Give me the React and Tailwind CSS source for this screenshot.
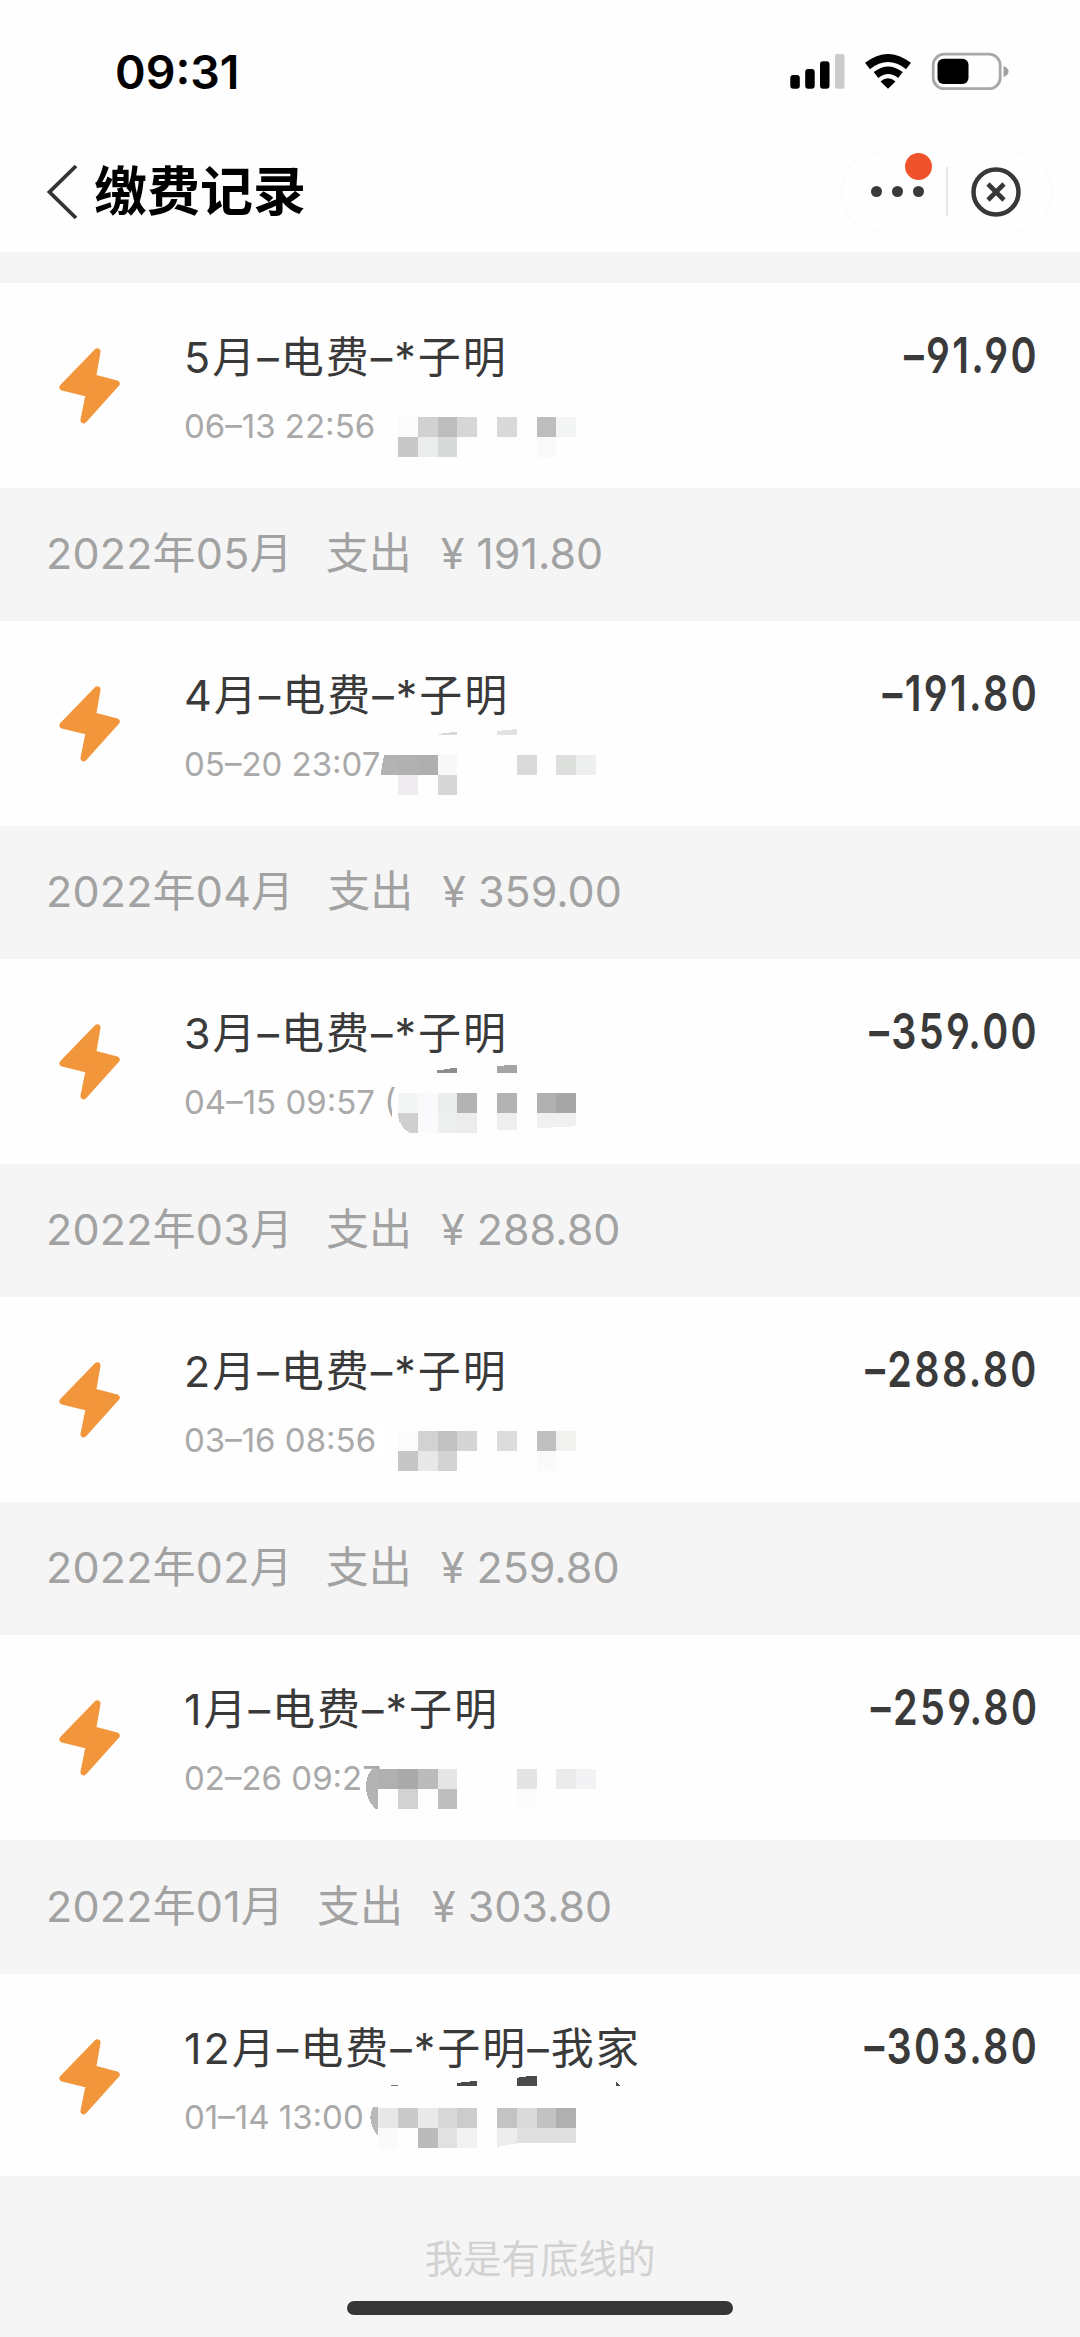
import React from 'react';

const TILE = 19.8;

// tiles: [column, row, color], paths: [d, color], both in row coordinates
const bills = [
  {
    title: '5月–电费–*子明',
    time: '06–13 22:56',
    amount: '–91.90',
    tiles: [
      [1, 0, '#fbfbfb'], [2, 0, '#d1d1d1'], [3, 0, '#bdbdbd'], [4, 0, '#d6d6d6'], [6, 0, '#d9d9d9'], [8, 0, '#bdbdbd'], [9, 0, '#f3f4f4'],
      [1, 1, '#c8c8c8'], [2, 1, '#ebedec'], [3, 1, '#d8dad9'], [8, 1, '#f9f9f9'],
    ],
    paths: [],
    summary: { month: '2022年05月', total: '191.80' },
  },
  {
    title: '4月–电费–*子明',
    time: '05–20 23:07',
    amount: '–191.80',
    tiles: [
      [1, 0, '#b1b1b1'], [2, 0, '#afafaf'], [3, 0, '#f8f8f8'], [7, 0, '#dadada'], [9, 0, '#dcdfdc'], [10, 0, '#eeefef'],
      [1, 1, '#eeecef'], [3, 1, '#d6d6d6'],
    ],
    paths: [
      ['M384 134h14v20h-17.500z', '#b3b3b3'],
      ['M437 114l6-2 14-1v3z', '#d8d8d8'],
      ['M497 110l20-2v6h-20z', '#e2e2e2'],
    ],
    summary: { month: '2022年04月', total: '359.00' },
  },
  {
    title: '3月–电费–*子明',
    time: '04–15 09:57 (',
    amount: '–359.00',
    tiles: [
      [1, 0, '#f4f5f5'], [2, 0, '#fafafc'], [3, 0, '#ebeded'], [4, 0, '#b3b3b3'], [6, 0, '#b3b3b3'], [8, 0, '#b0b0b0'], [9, 0, '#a6a6a6'],
      [2, 1, '#fafafd'], [3, 1, '#eeefef'], [4, 1, '#ececec'],
    ],
    paths: [
      ['M394 130h4v28h-6z', '#ffffff'],
      ['M398 153.750h19.750v20h-8q-10-5-11.750-17z', '#cfcfcf'],
      ['M497 153.750h19.750v17h-19.750z', '#eeeeee'],
      ['M536.500 153.750h39.500v13.500l-39.500 2z', '#f0f0f0'],
      ['M437 111.500l20-3v5h-20z', '#8d8d8d'],
      ['M497 107l20-1.500v8h-20z', '#a4a4a4'],
    ],
    summary: { month: '2022年03月', total: '288.80' },
  },
  {
    title: '2月–电费–*子明',
    time: '03–16 08:56',
    amount: '–288.80',
    tiles: [
      [1, 0, '#fbfbfb'], [2, 0, '#d2d2d2'], [3, 0, '#c1c1c1'], [4, 0, '#d5d5d5'], [6, 0, '#dcdcdc'], [8, 0, '#c0c0c0'], [9, 0, '#f2f2f1'],
      [1, 1, '#c6c6c6'], [2, 1, '#e8e8e8'], [3, 1, '#d3d3d3'], [8, 1, '#fafafa'],
    ],
    paths: [['M374.500 128h8v30h-8z', '#ffffff']],
    summary: { month: '2022年02月', total: '259.80' },
  },
  {
    title: '1月–电费–*子明',
    time: '02–26 09:27',
    amount: '–259.80',
    tiles: [
      [0, 0, '#b0b0b0'], [1, 0, '#a9a9a9'], [2, 0, '#bbbbbb'], [3, 0, '#e5e5e5'], [7, 0, '#e4e4e4'], [9, 0, '#ebebeb'], [10, 0, '#f3f2f5'],
      [1, 1, '#d2d2d2'], [3, 1, '#bebebe'], [7, 1, '#fcfcfc'],
    ],
    paths: [
      ['M363 134h20v27h-20z', '#ffffff'],
      ['M372 133.750h6v40h-3q-9-10-9-22 0-11 6-18z', '#b3b3b3'],
    ],
    summary: { month: '2022年01月', total: '303.80' },
  },
  {
    title: '12月–电费–*子明–我家',
    time: '01–14 13:00',
    amount: '–303.80',
    tiles: [
      [0, 0, '#e7e7e7'], [1, 0, '#cacaca'], [2, 0, '#e9e9e9'], [3, 0, '#d8d8d8'], [4, 0, '#cccccc'], [6, 0, '#c3c3c3'], [7, 0, '#dadada'], [8, 0, '#c2c2c2'], [9, 0, '#b0b0b0'],
      [0, 1, '#fafafa'], [2, 1, '#babbba'], [3, 1, '#e0e1e0'], [4, 1, '#f1f2f1'],
    ],
    paths: [
      ['M373 133h5v29q-12-15-5-29z', '#b8b8b8'],
      ['M497 153.500h79v15.500l-59 0-20 4z', '#e0e0e0'],
      ['M497 153.500h19.750v16l-19.750 3z', '#ededed'],
      ['M389 112.500q4-3 9-1z', '#777777'],
      ['M457 109.500q8-2.500 20-2v4.500h-20z', '#4b4b4b'],
      ['M517 104q8-2 20-2v10h-20z', '#4b4b4b'],
      ['M616 112v-4l4 4z', '#4b4b4b'],
    ],
  },
];

function StatusIcons() {
  return (
    <svg width="224" height="44" viewBox="788 50 224 44" fill="none">
      <rect x="790.300" y="75" width="9.500" height="13.700" rx="3" fill="#000" />
      <rect x="805.200" y="69" width="9.500" height="19.700" rx="3" fill="#000" />
      <rect x="820" y="61.200" width="9.500" height="27.500" rx="3" fill="#000" />
      <rect x="835" y="54" width="9.500" height="34.700" rx="2" fill="#cbcbcb" />
      <path d="M867.500 66Q888 50 908.500 66" stroke="#000" strokeWidth="8" />
      <path d="M876 75Q888 65.500 900.500 75" stroke="#000" strokeWidth="7.500" />
      <path d="M880.500 81.500Q888 75 895.500 81.500L888 88.700z" fill="#000" />
      <rect x="933.200" y="54.200" width="67" height="34.500" rx="11" stroke="#a8a8a8" strokeWidth="2.800" />
      <rect x="937.500" y="58.700" width="31" height="25.300" rx="6" fill="#000" />
      <path d="M1003.500 66q5 2 5 5.500t-5 5.500z" fill="#a0a0a0" />
    </svg>
  );
}

function Bolt() {
  return (
    <svg className="block" width="64" height="80" viewBox="57 63 64 80">
      <path
        d="M97.300 68.500L62.700 104.300L89 110.800L83.700 137.200L116.500 100.700L92.800 94.500z"
        fill="#f2963c"
        stroke="#f2963c"
        strokeWidth="6.500"
        strokeLinejoin="round"
      />
    </svg>
  );
}

function Mosaic({ tiles, paths }) {
  return (
    <svg
      className="absolute top-[100px] left-[360px]"
      width="270"
      height="80"
      viewBox="360 100 270 80"
      shapeRendering="crispEdges"
    >
      {paths.map(([d, color]) => (
        <path key={d} d={d} fill={color} />
      ))}
      {tiles.map(([col, row, color]) => (
        <rect
          key={`${col}-${row}`}
          x={378.2 + col * TILE}
          y={134 + row * 20}
          width={TILE}
          height="20"
          fill={color}
        />
      ))}
    </svg>
  );
}

function BillRow({ bill, last }) {
  return (
    <div className={`relative flex bg-[#fefefe] pl-[57px] pr-[41px] ${last ? 'h-[202px]' : 'h-[205px]'}`}>
      <div className="w-[127px] pt-[63px]">
        <Bolt />
      </div>
      <div className="flex-1 pt-[42px]">
        <p className="text-[43px] leading-[64px] tracking-[2px] whitespace-nowrap text-[#3a3a3a]">
          {bill.title}
        </p>
        <p className="mt-[15px] text-[33px] leading-[44px] whitespace-nowrap text-[#a9a9a9]">
          {bill.time}
        </p>
      </div>
      <p className="origin-right scale-x-[0.79] pt-[40px] text-[50px] leading-[64px] font-semibold tracking-[3px] whitespace-nowrap text-[#3a3a3a] [font-feature-settings:'cv04','cv03']">
        {bill.amount}
      </p>
      <Mosaic tiles={bill.tiles} paths={bill.paths} />
    </div>
  );
}

function MonthSummary({ month, total, last }) {
  return (
    <div
      className={`flex items-center pb-[2px] pl-[46px] text-[43px] whitespace-nowrap text-[#a2a2a2] ${last ? 'h-[134px]' : 'h-[133px]'}`}
    >
      <span className="tracking-[0.200px]">{month}</span>
      <span className="ml-[33px]">支出</span>
      <span className="ml-[29px]">¥</span>
      <span className="ml-[12px]">{total}</span>
    </div>
  );
}

export default function App() {
  return (
    <div className="flex h-[2337px] w-[1080px] flex-col overflow-hidden bg-[#f5f5f5] font-['Inter','Noto_Sans_CJK_SC',sans-serif]">
      <header className="h-[252px] bg-[#fefefe]">
        <div className="flex h-[144px] items-center justify-between pl-[115px] pr-[68px]">
          <span className="pt-[1px] text-[46.500px] font-semibold text-black">09:31</span>
          <StatusIcons />
        </div>
        <div className="flex h-[95px] items-center justify-between pl-[46px] pr-[27px]">
          <div className="flex items-center">
            <svg width="34" height="56" viewBox="0 0 34 56" fill="none">
              <path d="M30 2L3.500 28L30 54" stroke="#333" strokeWidth="3.800" />
            </svg>
            <h1 className="ml-[14px] pt-[2px] text-[53px] font-bold text-black">缴费记录</h1>
          </div>
          <div className="relative flex h-[82px] w-[213px] items-center rounded-full border-2 border-[#fbfbfb]">
            <div className="ml-[29px] flex gap-[10px]">
              <i className="size-[11px] rounded-full bg-[#3a3a3a]" />
              <i className="size-[11px] rounded-full bg-[#3a3a3a]" />
              <i className="size-[11px] rounded-full bg-[#3a3a3a]" />
            </div>
            <i className="absolute top-0 left-[63px] size-[27px] rounded-full bg-[#f0532b]" />
            <i className="ml-[22px] h-[49px] w-[2px] bg-[#e6e6e6]" />
            <svg className="ml-[23px]" width="50" height="50" viewBox="0 0 50 50" fill="none">
              <circle cx="25" cy="25" r="22.500" stroke="#383838" strokeWidth="4.500" />
              <path d="M17 17L33 33M33 17L17 33" stroke="#383838" strokeWidth="4.600" />
            </svg>
          </div>
        </div>
      </header>

      <main className="pt-[31px]">
        {bills.map((bill, i) => (
          <section key={bill.time}>
            <BillRow bill={bill} last={i === bills.length - 1} />
            {bill.summary && <MonthSummary {...bill.summary} last={i === bills.length - 2} />}
          </section>
        ))}
      </main>

      <footer className="flex flex-col items-center pt-[55px]">
        <p className="text-[38.500px] leading-[56px] text-[#d2d2d2]">我是有底线的</p>
        <div className="mt-[14px] h-[14px] w-[386px] rounded-full bg-[#363636]" />
      </footer>
    </div>
  );
}
